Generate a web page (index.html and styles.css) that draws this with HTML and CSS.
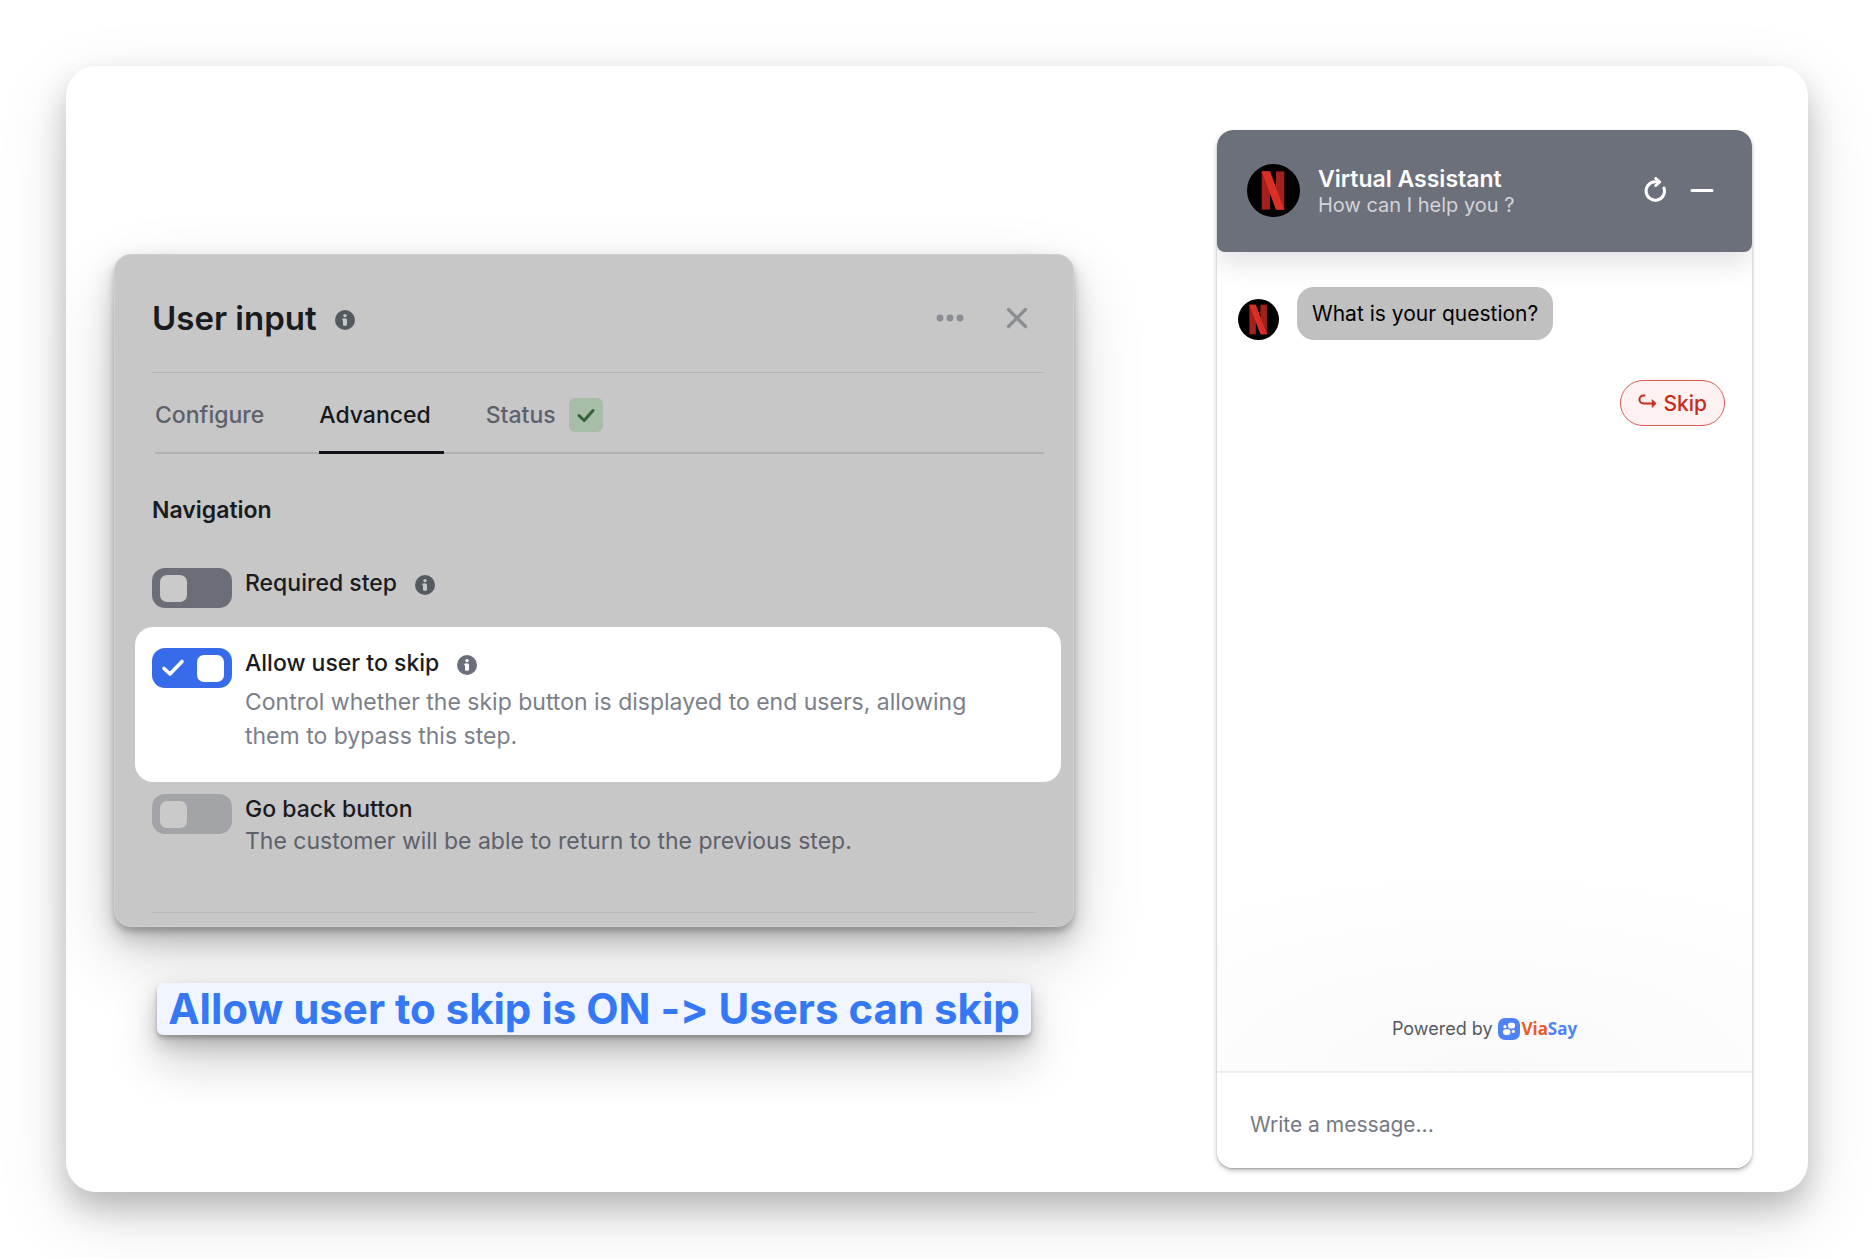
FILE: index.html
```
<!DOCTYPE html>
<html lang="en">
<head>
  <meta charset="UTF-8" />
  <meta name="viewport" content="width=device-width, initial-scale=1.0" />
  <title>Allow user to skip</title>
  <link rel="stylesheet" href="styles.css">
</head>
<body>
  <!-- shared icons -->
  <svg class="sprite" aria-hidden="true">
    <symbol id="info" viewBox="0 0 20 20">
      <circle cx="10" cy="10" r="10" fill="currentColor" />
      <circle class="cut" cx="10" cy="5.600" r="1.700" />
      <rect class="cut" x="8" y="8.500" width="4" height="7.200" rx="1.200" />
      <rect class="cut" x="7.200" y="8.500" width="3" height="2.200" rx="1.100" />
    </symbol>
    <symbol id="brand" viewBox="0 0 54 54">
      <circle cx="27" cy="27" r="27" fill="#000" />
      <rect x="15" y="7.500" width="8.500" height="39" fill="#a3211b" />
      <rect x="29.500" y="7.500" width="8.500" height="39" fill="#a3211b" />
      <rect x="15" y="7.500" width="8.500" height="39" fill="#d92f26" transform="translate(-2.800 0) skewX(20.400)" />
    </symbol>
  </svg>

  <main class="card">
    <section class="demo">
      <div class="panel">
        <header class="panel-header">
          <h1>User input</h1>
          <svg class="info"><use href="#info" /></svg>
          <div class="panel-actions">
            <button type="button" aria-label="More options">
              <svg width="28" height="28" viewBox="0 0 28 28" fill="currentColor">
                <circle cx="4" cy="14" r="3.400" /><circle cx="14" cy="14" r="3.400" /><circle cx="24" cy="14" r="3.400" />
              </svg>
            </button>
            <button type="button" aria-label="Close">
              <svg width="28" height="28" viewBox="0 0 28 28" fill="none" stroke="currentColor" stroke-width="3.200" stroke-linecap="round">
                <path d="M5.500 5.500l17 17M22.500 5.500l-17 17" />
              </svg>
            </button>
          </div>
        </header>

        <nav class="tabs">
          <button type="button" class="tab">Configure</button>
          <button type="button" class="tab active">Advanced</button>
          <button type="button" class="tab">Status
            <span class="badge">
              <svg width="34" height="34" viewBox="0 0 34 34" fill="none" stroke="#356338" stroke-width="3" stroke-linecap="round" stroke-linejoin="round">
                <path d="M10 17.500l5.200 5L24 12.500" />
              </svg>
            </span>
          </button>
        </nav>

        <h2>Navigation</h2>

        <div class="option">
          <span class="switch"><input type="checkbox" id="required"></span>
          <div class="option-text">
            <div class="option-title">
              <label for="required">Required step</label>
              <svg class="info"><use href="#info" /></svg>
            </div>
          </div>
        </div>

        <div class="option highlight">
          <span class="switch">
            <input type="checkbox" id="skip" checked>
            <svg class="tick" viewBox="0 0 24 20" fill="none" stroke="#fff" stroke-width="3.600" stroke-linecap="round" stroke-linejoin="round">
              <path d="M3 10.500l6 5.500L21 3.500" />
            </svg>
          </span>
          <div class="option-text">
            <div class="option-title">
              <label for="skip">Allow user to skip</label>
              <svg class="info"><use href="#info" /></svg>
            </div>
            <p>Control whether the skip button is displayed to end users, allowing them to bypass this step.</p>
          </div>
        </div>

        <div class="option">
          <span class="switch"><input type="checkbox" id="back" disabled></span>
          <div class="option-text">
            <div class="option-title">
              <label for="back">Go back button</label>
            </div>
            <p>The customer will be able to return to the previous step.</p>
          </div>
        </div>

        <hr>
      </div>

      <div class="caption">Allow user to skip is ON -&gt; Users can skip</div>
    </section>

    <section class="chat">
      <header class="chat-header">
        <svg class="avatar"><use href="#brand" /></svg>
        <div class="chat-heading">
          <div class="chat-title">Virtual Assistant</div>
          <div class="chat-subtitle">How can I help you ?</div>
        </div>
        <div class="chat-actions">
          <button type="button" aria-label="Restart">
            <svg width="24" height="26" viewBox="0 0 24 26" fill="none" stroke="#fff" stroke-width="3" stroke-linecap="round" stroke-linejoin="round">
              <path d="M21 11A9.200 9.200 0 1 1 12 4.800h4" />
              <path d="M12.800 1.500l3.800 3.500-3.800 3.500" />
            </svg>
          </button>
          <button type="button" aria-label="Minimize">
            <svg width="24" height="26" viewBox="0 0 24 26" stroke="#fff" stroke-width="3" stroke-linecap="round">
              <path d="M2 13.500h20" />
            </svg>
          </button>
        </div>
      </header>

      <div class="messages">
        <div class="message">
          <svg class="avatar small"><use href="#brand" /></svg>
          <div class="bubble">What is your question?</div>
        </div>
        <button type="button" class="skip-btn">
          <svg width="20" height="20" viewBox="0 0 20 20" fill="none" stroke="currentColor" stroke-width="2" stroke-linecap="round" stroke-linejoin="round">
            <path d="M6.500 2.500H5.500a3.800 3.800 0 0 0 0 8H15" />
            <path d="M14.500 7l3.500 3.500-3.500 3.500z" fill="currentColor" stroke-width="1" />
          </svg>
          Skip
        </button>
        <div class="powered">
          Powered by
          <svg width="22" height="22" viewBox="0 0 22 22">
            <rect width="22" height="22" rx="7" fill="#4f82f7" />
            <rect x="10" y="4.800" width="7" height="5.600" rx="2.300" fill="#fff" />
            <circle cx="7" cy="8.700" r="1.600" fill="#fff" />
            <rect x="5" y="11.300" width="7.400" height="5.600" rx="2.300" fill="#fff" />
            <circle cx="15.300" cy="13.400" r="1.600" fill="#fff" />
          </svg>
          <b><span>Via</span>Say</b>
        </div>
      </div>

      <form class="composer">
        <input type="text" placeholder="Write a message..." aria-label="Write a message">
      </form>
    </section>
  </main>
</body>
</html>
```
FILE: styles.css
```
:root {
  --dim: #c7c7c7;
  --ink: #1a1b1e;
  --muted: #5d616b;
  --blue: #386bea;
}

* {
  margin: 0;
  padding: 0;
  box-sizing: border-box;
}

body {
  font-family: Inter, "Liberation Sans", sans-serif;
  font-size: 23px;
  background: #fff;
  color: var(--ink);
  display: flex;
  min-height: 100vh;
  padding: 66px;
}

button, input {
  font: inherit;
  color: inherit;
  background: none;
  border: none;
}

button {
  cursor: pointer;
}

svg {
  display: block;
  flex: none;
}

.sprite {
  position: absolute;
  width: 0;
  height: 0;
}

.card {
  flex: 1;
  display: grid;
  grid-template-columns: minmax(0, 960px) 535px;
  justify-content: space-between;
  padding: 64px 56px 24px 48px;
  border-radius: 30px;
  box-shadow: 0 16px 30px rgba(0, 0, 0, 0.2), 0 24px 70px rgba(0, 0, 0, 0.13);
}

/* left side */
.demo {
  align-self: start;
  margin-top: 124px;
  display: flex;
  flex-direction: column;
  align-items: center;
  gap: 56px;
  clip-path: inset(-100px -100px -70px -100px);
}

.panel {
  width: 100%;
  background: var(--dim);
  border: 1px solid #d0d0d0;
  border-radius: 17px;
  padding: 0 29px 13px 37px;
  box-shadow: 0 5px 6px rgba(0, 0, 0, 0.2), 0 12px 24px rgba(0, 0, 0, 0.22), 0 30px 70px rgba(0, 0, 0, 0.16);
}

.panel-header {
  display: flex;
  align-items: center;
  height: 118px;
  padding-top: 9px;
  border-bottom: 1px solid #b3b5bb;
}

.info {
  width: 20px;
  height: 20px;
  margin: 4px 0 0 18px;
  color: #555962;
}

.info, .highlight {
  --cut: var(--dim);
}

.cut {
  fill: var(--cut);
}

h1 {
  font-size: 33px;
  line-height: 40px;
  font-weight: 600;
}

.panel-actions {
  display: flex;
  gap: 39px;
  margin-left: auto;
  padding-right: 13px;
  color: #8b8d94;
}

.tabs {
  display: flex;
  margin-left: 3px;
  height: 81px;
  border-bottom: 2px solid #b1b1b1;
}

.tab {
  display: flex;
  align-items: center;
  gap: 13px;
  height: 81px;
  margin-right: 42px;
  padding: 2px 13px 0 0;
  color: var(--muted);
  font-weight: 500;
}

.tab.active {
  color: #15171a;
  border-bottom: 3px solid #111318;
  padding-top: 5px;
}

.badge {
  background: #a7bda8;
  border-radius: 6px;
}

h2 {
  font-size: 23px;
  line-height: 28px;
  font-weight: 600;
  margin: 42px 0 32px;
}

.option {
  display: flex;
  align-items: flex-start;
  gap: 13px;
  padding-top: 12px;
}

.switch {
  position: relative;
  display: flex;
}

.switch input {
  appearance: none;
  display: flex;
  align-items: center;
  width: 80px;
  height: 40px;
  padding: 0 8px;
  border-radius: 13px;
  background: #6b6e76;
}

.switch input::before {
  content: "";
  width: 27px;
  height: 27px;
  border-radius: 7px;
  background: #cacaca;
}

.switch input:checked {
  background: var(--blue);
  justify-content: flex-end;
}

.switch input:checked::before {
  background: #fff;
}

.switch input:disabled {
  background: #a3a4a8;
}

.tick {
  position: absolute;
  left: 9px;
  top: 10px;
  width: 24px;
  height: 20px;
  pointer-events: none;
}

.option-title {
  display: flex;
  align-items: center;
  height: 30px;
  font-weight: 500;
}

.option p {
  color: var(--muted);
  line-height: 34px;
}

.highlight {
  background: #fff;
  border-radius: 18px;
  margin: 19px -17px 0 -17px;
  padding: 21px 80px 29px 17px;
}

.highlight .option-text {
  display: flex;
  flex-direction: column;
  gap: 7px;
}

.highlight .info {
  --cut: #fff;
  color: #6b6f79;
}

.highlight p {
  color: #7b7f8a;
}

hr {
  border: none;
  border-top: 1px solid #b7b7b7;
  margin: 54px 9px 0 0;
}

.caption {
  padding: 0 11px;
  border-radius: 6px;
  background: #f0f5ff;
  color: #3478f6;
  font-size: 42px;
  line-height: 52px;
  font-weight: 700;
  font-feature-settings: "calt" 0;
  white-space: nowrap;
  box-shadow: 0 3px 4px rgba(0, 0, 0, 0.25), 0 10px 20px rgba(0, 0, 0, 0.2), 0 26px 50px rgba(0, 0, 0, 0.2);
}

/* chat widget */
.chat {
  display: flex;
  flex-direction: column;
  border-radius: 16px;
  box-shadow: 0 1px 2px rgba(0, 0, 0, 0.22), 0 3px 5px rgba(0, 0, 0, 0.22);
  overflow: hidden;
}

.chat-header {
  position: relative;
  display: flex;
  align-items: center;
  height: 122px;
  padding: 0 38px 2px 30px;
  border-radius: 16px 16px 8px 8px;
  background: #6c707b;
  color: #fff;
  box-shadow: 0 8px 30px rgba(17, 24, 39, 0.15);
}

.avatar {
  width: 53px;
  height: 53px;
}

.avatar.small {
  width: 41px;
  height: 41px;
}

.chat-heading {
  margin: 4px 0 0 18px;
}

.chat-title {
  font-weight: 600;
  line-height: 26px;
}

.chat-subtitle {
  font-size: 20px;
  line-height: 26px;
  color: #d2d3d7;
}

.chat-actions {
  display: flex;
  gap: 23px;
  margin-left: auto;
}

.messages {
  flex: 1;
  display: flex;
  flex-direction: column;
  padding: 35px 27px 0 21px;
  font-size: 21px;
  background: radial-gradient(ellipse 480px 200px at 50% 100%, #f9f9f9, #fff);
}

.message {
  display: flex;
  align-items: flex-end;
  gap: 18px;
}

.bubble {
  padding: 14px 15px 13px;
  border-radius: 17px;
  background: #c0c0c0;
  color: #000;
  line-height: 26px;
}

.skip-btn {
  align-self: flex-end;
  display: flex;
  align-items: center;
  gap: 5px;
  height: 46px;
  margin-top: 40px;
  padding: 0 17px;
  border: 1px solid #dc5b50;
  border-radius: 23px;
  background: #fdf2f1;
  color: #c82a1c;
  font-weight: 500;
}

.powered {
  display: flex;
  align-items: center;
  justify-content: center;
  gap: 5px;
  margin: auto 0 31px;
  padding-left: 6px;
  font-size: 18px;
  line-height: 22px;
  color: #555963;
}

.powered b {
  font-family: "Noto Sans", "Open Sans", sans-serif;
  font-size: 17px;
  color: #4f82f7;
  margin-left: -3px;
}

.powered b span {
  color: #ea5a2a;
}

.composer {
  border-top: 2px solid #eee;
  background: #fff;
}

.composer input {
  width: 100%;
  height: 95px;
  padding: 8px 33px 0;
  font-size: 21px;
  outline: none;
}

.composer input::placeholder {
  color: #757984;
  opacity: 1;
}
```
